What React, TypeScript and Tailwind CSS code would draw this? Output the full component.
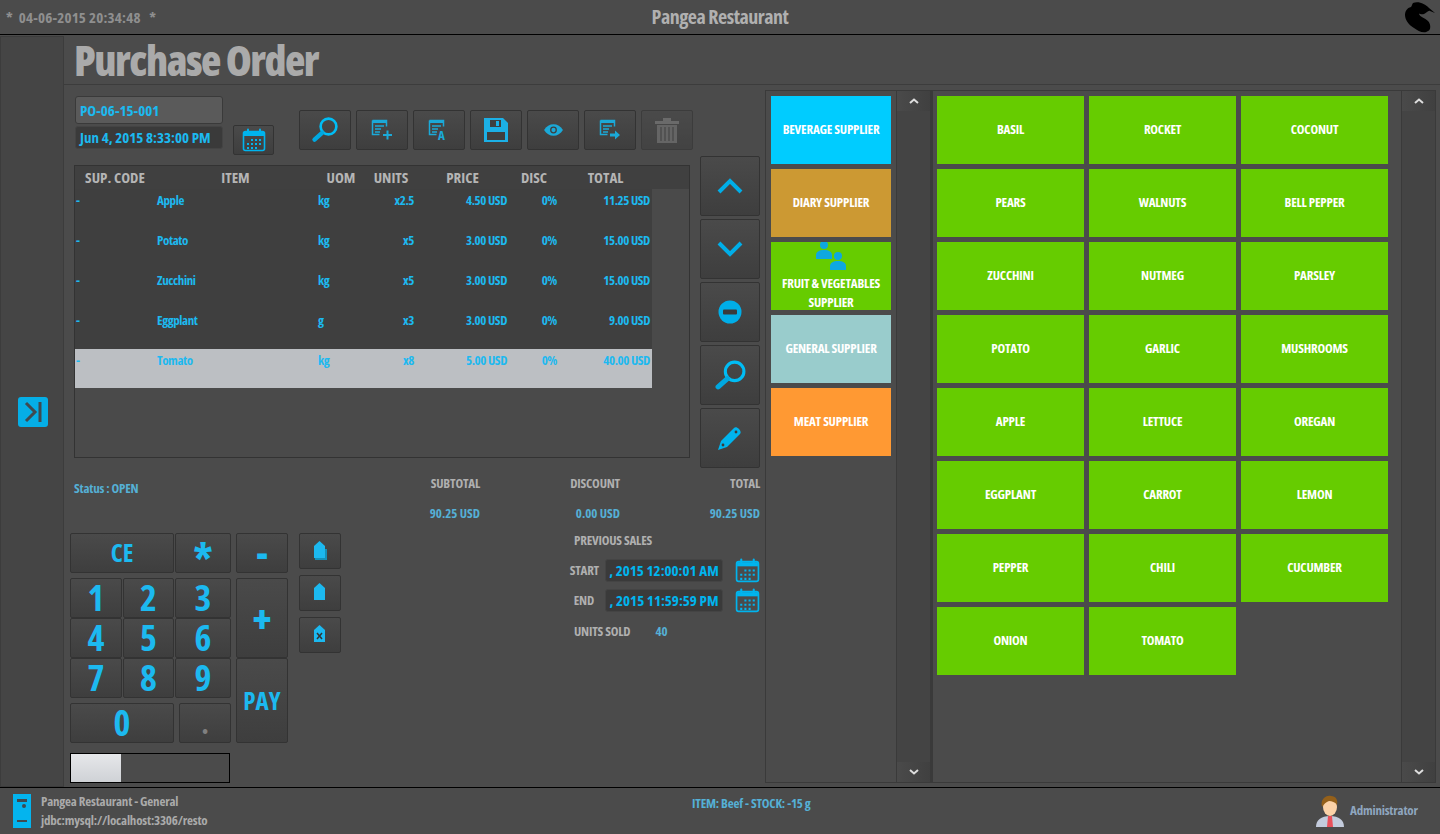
import type { ReactNode } from "react"

const orders = [
  { item: "Apple", uom: "kg", units: "x2.5", price: "4.50 USD", total: "11.25 USD" },
  { item: "Potato", uom: "kg", units: "x5", price: "3.00 USD", total: "15.00 USD" },
  { item: "Zucchini", uom: "kg", units: "x5", price: "3.00 USD", total: "15.00 USD" },
  { item: "Eggplant", uom: "g", units: "x3", price: "3.00 USD", total: "9.00 USD" },
  { item: "Tomato", uom: "kg", units: "x8", price: "5.00 USD", total: "40.00 USD" },
]

const products = [
  "BASIL", "ROCKET", "COCONUT", "PEARS", "WALNUTS", "BELL PEPPER", "ZUCCHINI", "NUTMEG", "PARSLEY",
  "POTATO", "GARLIC", "MUSHROOMS", "APPLE", "LETTUCE", "OREGAN", "EGGPLANT", "CARROT", "LEMON",
  "PEPPER", "CHILI", "CUCUMBER", "ONION", "TOMATO",
]

function Btn({ className = "", children }: { className?: string; children?: ReactNode }) {
  return (
    <div className={`flex items-center justify-center rounded-[2px] border border-[#333] bg-gradient-to-b from-[#4a4a4a] to-[#3e3e3e] text-[#1cb9f0] ${className}`}>
      {children}
    </div>
  )
}

function Calendar({ size = 24 }: { size?: number }) {
  return (
    <svg width={size} height={size} viewBox="0 0 24 24" fill="none">
      <rect x="1.5" y="3.5" width="21" height="19" rx="2" stroke="#00b4ee" strokeWidth="1.6" />
      <path d="M2 4h20v4H2z" fill="#00b4ee" />
      <path d="M6 1.5v4M18 1.5v4" stroke="#00b4ee" strokeWidth="2" strokeLinecap="round" />
      <path d="M9 11h2v2H9zM13 11h2v2h-2zM17 11h2v2h-2zM5 15h2v2H5zM9 15h2v2H9zM13 15h2v2h-2zM17 15h2v2h-2zM5 19h2v2H5zM9 19h2v2H9zM13 19h2v2h-2z" fill="#00b4ee" />
    </svg>
  )
}

function Search({ size = 28 }: { size?: number }) {
  return (
    <svg width={size} height={size} viewBox="0 0 32 32" fill="none">
      <circle cx="20" cy="12" r="9" stroke="#00bdf5" strokeWidth="3" />
      <path d="M13 19 4 27" stroke="#00a8e0" strokeWidth="5" strokeLinecap="round" />
    </svg>
  )
}

function DocIcon({ children }: { children: ReactNode }) {
  return (
    <svg width="22" height="22" viewBox="0 0 22 22" fill="none">
      <path d="M1.5 1.500h14v6M1.500 1.500v14h7" stroke="#1ba9d8" strokeWidth="1.5" />
      <path d="M1.500 1.500h14v2.500h-14z" fill="#1ba9d8" />
      <path d="M4 7h9M4 10h6M4 13h5" stroke="#1ba9d8" strokeWidth="1.3" />
      {children}
    </svg>
  )
}

function Tag({ x, stack }: { x?: boolean; stack?: boolean }) {
  return (
    <svg width="16" height="20" viewBox="0 0 16 20">
      {stack && <path d="M2 8h13v11H3z" fill="#1590b8" />}
      <path d="M2 5 7.500 0 13 5v12H2z" fill="#1cb9f0" />
      {x && <path d="M5 8 10 14M10 8 5 14" stroke="#333" strokeWidth="1.5" />}
    </svg>
  )
}

function Tile({ bg, className = "", children }: { bg: string; className?: string; children: ReactNode }) {
  return (
    <div className={`relative flex h-[68px] items-center justify-center pb-[2px] text-center text-[13px] leading-[19px] font-bold tracking-[-0.2px] text-white ${bg} ${className}`}>
      {children}
    </div>
  )
}

function ScrollBar() {
  return (
    <div className="flex w-[35px] flex-col justify-between border-x border-[#3a3a3a] bg-[#444]">
      <div className="flex h-[20px] items-center justify-center bg-gradient-to-r from-[#4a4a4a] to-[#404040]">
        <svg width="10" height="6" viewBox="0 0 10 6"><path d="M1 5l4-3.500L9 5" stroke="#ddd" strokeWidth="2" fill="none" /></svg>
      </div>
      <div className="flex h-[20px] items-center justify-center bg-gradient-to-r from-[#4a4a4a] to-[#404040]">
        <svg width="10" height="6" viewBox="0 0 10 6"><path d="M1 1l4 3.500L9 1" stroke="#ddd" strokeWidth="2" fill="none" /></svg>
      </div>
    </div>
  )
}

function OrderTable() {
  const cols = "grid grid-cols-[80px_161px_50px_50px_93px_50px_93px]"
  return (
    <div className="ml-[10px] mt-[15px] h-[293px] w-[616px] border border-[#333] bg-[#4a4a4a]">
      <div className="flex h-[23px] bg-[#404040] text-[#b5b5b5]">
        <div className={`${cols} w-[577px] text-center text-[15px] leading-[22px] font-bold`}>
          <span>SUP. CODE</span><span>ITEM</span><span>UOM</span><span>UNITS</span><span>PRICE</span><span>DISC</span><span>TOTAL</span>
        </div>
      </div>
      <div className="w-[577px] bg-[#3f3f3f] text-[13px] font-bold tracking-[-0.4px] text-[#1cb9f0]">
        {orders.map((o, i) => (
          <div key={o.item} className={`${cols} pt-[2px] ${i === 4 ? "h-[39px] bg-[#bcbfc3]" : "h-10"}`}>
            <span className="pl-[1px]">-</span>
            <span className="pl-[2px]">{o.item}</span>
            <span className="pl-[2px]">{o.uom}</span>
            <span className="pr-[2px] text-right">{o.units}</span>
            <span className="pr-[2px] text-right">{o.price}</span>
            <span className="pr-[2px] text-right">0%</span>
            <span className="pr-[2px] text-right">{o.total}</span>
          </div>
        ))}
      </div>
    </div>
  )
}

function Keypad() {
  const num = "h-[40px] text-[36px] font-bold leading-none"
  return (
    <div className="flex items-start">
      <div className="flex w-[218px] flex-col">
        <div className="flex h-[40px] gap-px">
          <Btn className="w-[104px] text-[25px] font-bold">CE</Btn>
          <Btn className="w-[56px] text-[44px] font-bold"><span className="mt-[12px]">*</span></Btn>
          <Btn className="ml-[4px] w-[52px] text-[36px] font-extrabold">-</Btn>
        </div>
        <div className="mt-[5px] flex gap-[5px]">
          <div className="w-[161px]">
            <div className="grid grid-cols-[52px_51px_56px] gap-x-px">
              {"123456789".split("").map((n) => <Btn key={n} className={num}>{n}</Btn>)}
            </div>
            <div className="mt-[5px] flex gap-[5px]">
              <Btn className={`w-[104px] ${num}`}>0</Btn>
              <Btn className="h-[40px] w-[52px] items-end pb-[4px] text-[30px] leading-none font-bold text-[#808080]">.</Btn>
            </div>
          </div>
          <div className="flex w-[52px] flex-col">
            <Btn className="h-[80px] text-[38px] font-extrabold">+</Btn>
            <Btn className="h-[85px] text-[25px] font-bold">PAY</Btn>
          </div>
        </div>
      </div>
      <div className="ml-[11px] flex flex-col gap-[6px]">
        <Btn className="h-[36px] w-[42px]"><Tag stack /></Btn>
        <Btn className="h-[36px] w-[42px]"><Tag /></Btn>
        <Btn className="h-[36px] w-[42px]"><Tag x /></Btn>
      </div>
    </div>
  )
}

function Totals() {
  const field = "flex h-[23px] w-[118px] items-center justify-center rounded-[3px] border border-[#444] bg-[#3a3a3a] text-[15px] font-bold text-[#00b4ee]"
  const label = "text-[13px] font-bold tracking-[-0.2px] text-[#b0b0b0]"
  return (
    <div className="flex w-[420px] flex-col">
      <div className="grid grid-cols-3 text-right">
        <span className={`${label} h-[30px]`}>SUBTOTAL</span>
        <span className={label}>DISCOUNT</span>
        <span className={label}>TOTAL</span>
        <span className="text-[13px] font-bold text-[#55b0d6]">90.25 USD</span>
        <span className="text-[13px] font-bold text-[#55b0d6]">0.00 USD</span>
        <span className="text-[13px] font-bold text-[#55b0d6]">90.25 USD</span>
      </div>
      <div className={`${label} ml-[234px] mt-[7px]`}>PREVIOUS SALES</div>
      <div className="mt-[8px] flex items-center">
        <span className={`${label} w-[259px] text-right`}>START</span>
        <div className={`${field} ml-[6px]`}>, 2015 12:00:01 AM</div>
        <div className="ml-[12px]"><Calendar size={25} /></div>
      </div>
      <div className="mt-[5px] flex items-center">
        <span className={`${label} w-[254px] text-right`}>END</span>
        <div className={`${field} ml-[11px]`}>, 2015 11:59:59 PM</div>
        <div className="ml-[12px]"><Calendar size={25} /></div>
      </div>
      <div className="ml-[234px] mt-[9px] flex gap-[25px]">
        <span className={label}>UNITS SOLD</span>
        <span className="text-[13px] font-bold text-[#55b0d6]">40</span>
      </div>
    </div>
  )
}

export default function App() {
  return (
    <div className="flex h-[834px] w-[1440px] flex-col overflow-hidden whitespace-nowrap bg-[#4b4b4b] font-['Open_Sans','Liberation_Sans',sans-serif] font-stretch-condensed">
      <header className="relative flex h-[35px] shrink-0 items-center justify-center border-b border-black">
        <span className="absolute left-[6px] text-[15px] font-bold tracking-[0.2px] text-[#8f8f8f]">*&nbsp; 04-06-2015 20:34:48 &nbsp;&nbsp;*</span>
        <span className="text-[20px] font-bold tracking-[-0.5px] text-[#b0b0b0]">Pangea Restaurant</span>
        <svg className="absolute right-[4px] top-[1px]" width="32" height="32" viewBox="0 0 32 32">
          <path d="M9 2C15 0 21 3 25 7l6 5-5-2c-2-1-3 2-6 3-3 1-5-1-5 0 1 3 6 4 9 7 3 3 3 9 0 10-4 3-10 0-14-3C5 24 1 19 1 14c0-4 2-7 6-8 1-1 1-3 2-4z" fill="#000" />
        </svg>
      </header>

      <div className="flex min-h-0 flex-1">
        <aside className="mt-px flex w-[64px] shrink-0 items-center justify-center border border-[#3c3c3c] bg-[#454545] pl-[2px]">
          <svg className="mt-[1px]" width="30" height="30" viewBox="0 0 30 30">
            <rect width="30" height="30" rx="3" fill="#05aee6" />
            <path d="M8 6l9 9-9 9M22 5v20" stroke="#3f4a50" strokeWidth="3" fill="none" />
          </svg>
        </aside>

        <main className="flex min-w-0 flex-1 flex-col">
          <div className="h-[50px] shrink-0 border-b border-[#3c3c3c] pl-[10px] text-[42px] leading-[50px] font-extrabold tracking-[-1.5px] text-[#aaa]">Purchase Order</div>
          <div className="flex min-h-0 flex-1 pb-[4px]">
            <section className="w-[701px] shrink-0">
              <div className="flex h-[65px] items-start pl-[11px] pt-[11px]">
                <div className="w-[148px]">
                  <div className="flex h-[28px] items-center rounded-[3px] border border-[#3a3a3a] bg-[#5a5a5a] pl-[4px] text-[15px] font-bold text-[#1cb9f0]">PO-06-15-001</div>
                  <div className="mt-[2px] flex h-[23px] items-center rounded-[3px] border border-[#444] bg-[#3a3a3a] pl-[4px] text-[15px] font-bold text-[#1cb9f0]">Jun 4, 2015 8:33:00 PM</div>
                </div>
                <Btn className="ml-[10px] mt-[29px] h-[30px] w-[41px]"><Calendar size={24} /></Btn>
                <div className="ml-[25px] mt-[14px] flex gap-[5px]">
                  <Btn className="h-[40px] w-[52px]"><Search size={28} /></Btn>
                  <Btn className="h-[40px] w-[52px]"><DocIcon><path d="M12 16h9M16.500 11.500v9" stroke="#1ba9d8" strokeWidth="2" /></DocIcon></Btn>
                  <Btn className="h-[40px] w-[52px]"><DocIcon><text x="10" y="21" fontSize="13" fontWeight="bold" fill="#1ba9d8">A</text></DocIcon></Btn>
                  <Btn className="h-[40px] w-[52px]">
                    <svg width="24" height="24" viewBox="0 0 24 24"><path d="M0 0h19l5 5v19H0z" fill="#1cb0e6" /><path d="M6 2h11v7H6z" fill="#3f3f3f" /><path d="M3 14h18v8H3z" fill="#3f3f3f" /><path d="M12 3h3v5h-3z" fill="#1cb0e6" /></svg>
                  </Btn>
                  <Btn className="h-[40px] w-[52px]">
                    <svg width="19" height="12" viewBox="0 0 22 14"><path d="M0 7c5-9 17-9 22 0-5 9-17 9-22 0z" fill="#1ba9d8" /><circle cx="11" cy="7" r="4" fill="#3f3f3f" /><circle cx="11" cy="7" r="2.500" fill="#1ba9d8" /></svg>
                  </Btn>
                  <Btn className="h-[40px] w-[52px]"><DocIcon><path d="M11 14.500h5v-3l5 4.500-5 4.500v-3h-5z" fill="#1ba9d8" /></DocIcon></Btn>
                  <Btn className="h-[40px] w-[52px] opacity-60">
                    <svg width="24" height="25" viewBox="0 0 24 25"><path d="M0 3h24v3H0zM8 0h8v3H8z" fill="#808080" /><path d="M2 7h20v18H2z" fill="#777" /><path d="M6 9v14M10 9v14M14 9v14M18 9v14" stroke="#444" strokeWidth="1.2" /></svg>
                  </Btn>
                </div>
              </div>

              <div className="flex">
                <OrderTable />
                <div className="ml-[10px] mt-[6px] flex w-[60px] flex-col gap-[3px]">
                  <Btn className="h-[60px]"><svg width="26" height="16" viewBox="0 0 26 16"><path d="M2 14 13 3l11 11" stroke="#00aee8" strokeWidth="4" fill="none" /></svg></Btn>
                  <Btn className="h-[60px]"><svg width="26" height="16" viewBox="0 0 26 16"><path d="M2 2l11 11L24 2" stroke="#00aee8" strokeWidth="4" fill="none" /></svg></Btn>
                  <Btn className="h-[60px]"><svg width="24" height="24" viewBox="0 0 24 24"><circle cx="12" cy="12" r="11.500" fill="#00aee8" /><rect x="5" y="9.500" width="14" height="5" rx="1" fill="#3a3a3a" /></svg></Btn>
                  <Btn className="h-[60px]"><Search size={33} /></Btn>
                  <Btn className="h-[60px]"><svg width="26" height="26" viewBox="0 0 26 26"><path d="M1 25l3-9L17 3c1-1 3-1 5 1s2 4 1 5L10 22z" fill="#00b4ee" /><circle cx="19" cy="7" r="1.400" fill="#3a3a3a" /><circle cx="6" cy="20" r="1.400" fill="#3a3a3a" /></svg></Btn>
                </div>
              </div>

              <div className="mt-[6px] flex">
                <div className="ml-[6px] w-[270px]">
                  <div className="ml-[4px] h-[59px] pt-[5px] text-[13px] font-bold tracking-[-0.2px] text-[#55b0d6]">Status : OPEN</div>
                  <Keypad />
                  <div className="mt-[10px] flex h-[30px] w-[160px] border border-black">
                    <div className="w-[50px] bg-gradient-to-b from-[#e6e7ea] to-[#cfd2d6]" />
                  </div>
                </div>
                <Totals />
              </div>
            </section>

            <section className="ml-0 flex h-[693px] w-[167px] shrink-0 self-end border border-[#3a3a3a] pl-[5px]">
              <div className="flex w-[120px] shrink-0 flex-col gap-[5px] pt-[5px]">
                <Tile bg="bg-[#00ccff]">BEVERAGE SUPPLIER</Tile>
                <Tile bg="bg-[#cc9933]">DIARY SUPPLIER</Tile>
                <Tile bg="bg-[#66cc00]" className="items-end">
                  <svg className="absolute left-[44px] top-0" width="34" height="28" viewBox="0 0 34 28">
                    <g fill="#0ea8e0"><circle cx="9" cy="3" r="4" /><path d="M1 17v-4c0-3 3-5 8-5s8 2 8 5v4z" /><circle cx="23" cy="14" r="4" /><path d="M15 28v-4c0-3 3-5 8-5s8 2 8 5v4z" /></g>
                  </svg>
                  <span className="-mb-[4px] block w-full">FRUIT &amp; VEGETABLES<br />SUPPLIER</span>
                </Tile>
                <Tile bg="bg-[#99cccc]">GENERAL SUPPLIER</Tile>
                <Tile bg="bg-[#ff9933]">MEAT SUPPLIER</Tile>
              </div>
              <div className="ml-[5px] flex"><ScrollBar /></div>
            </section>

            <section className="flex h-[693px] w-[504px] shrink-0 self-end border border-[#3a3a3a] pl-[4px]">
              <div className="grid h-fit w-[451px] shrink-0 grid-cols-3 gap-[5px] pt-[5px]">
                {products.map((p) => <Tile key={p} bg="bg-[#66cc00]">{p}</Tile>)}
              </div>
              <div className="ml-[13px] flex"><ScrollBar /></div>
            </section>
          </div>
        </main>
      </div>

      <footer className="flex h-[47px] shrink-0 items-center border-t border-black pl-[13px]">
        <svg width="18" height="34" viewBox="0 0 18 34"><rect width="18" height="34" fill="#04b4ee" /><rect x="4" y="5" width="10" height="3" fill="#3f4a50" /><circle cx="11" cy="12" r="2" fill="#3f4a50" /><rect x="4" y="26" width="10" height="2" fill="#3f4a50" /></svg>
        <div className="ml-[10px] w-[300px] text-[13px] leading-[19px] font-bold tracking-[-0.2px] text-[#aaa]">
          <div>Pangea Restaurant - General</div>
          <div>jdbc:mysql://localhost:3306/resto</div>
        </div>
        <div className="ml-[351px] w-[400px] self-start pt-[6px] text-[13px] font-bold tracking-[-0.2px] text-[#55b0d6]">ITEM: Beef - STOCK: -15 g</div>
        <div className="ml-[223px] flex items-center gap-[5px]">
          <svg width="30" height="33" viewBox="0 0 30 33">
            <path d="M1 32c0-7 5-11 14-11s14 4 14 11z" fill="#c3cbdc" />
            <path d="M13 21h4l1 11h-6z" fill="#e8505b" />
            <ellipse cx="15" cy="12" rx="7" ry="9" fill="#fbd2a8" />
            <path d="M7 12C5 4 11 0 16 1c5 0 7 4 6 9-2-3-5-4-8-4-3 1-5 3-7 6z" fill="#94601a" />
          </svg>
          <span className="text-[13px] font-bold tracking-[-0.2px] text-[#8fa6bf]">Administrator</span>
        </div>
      </footer>
    </div>
  )
}
